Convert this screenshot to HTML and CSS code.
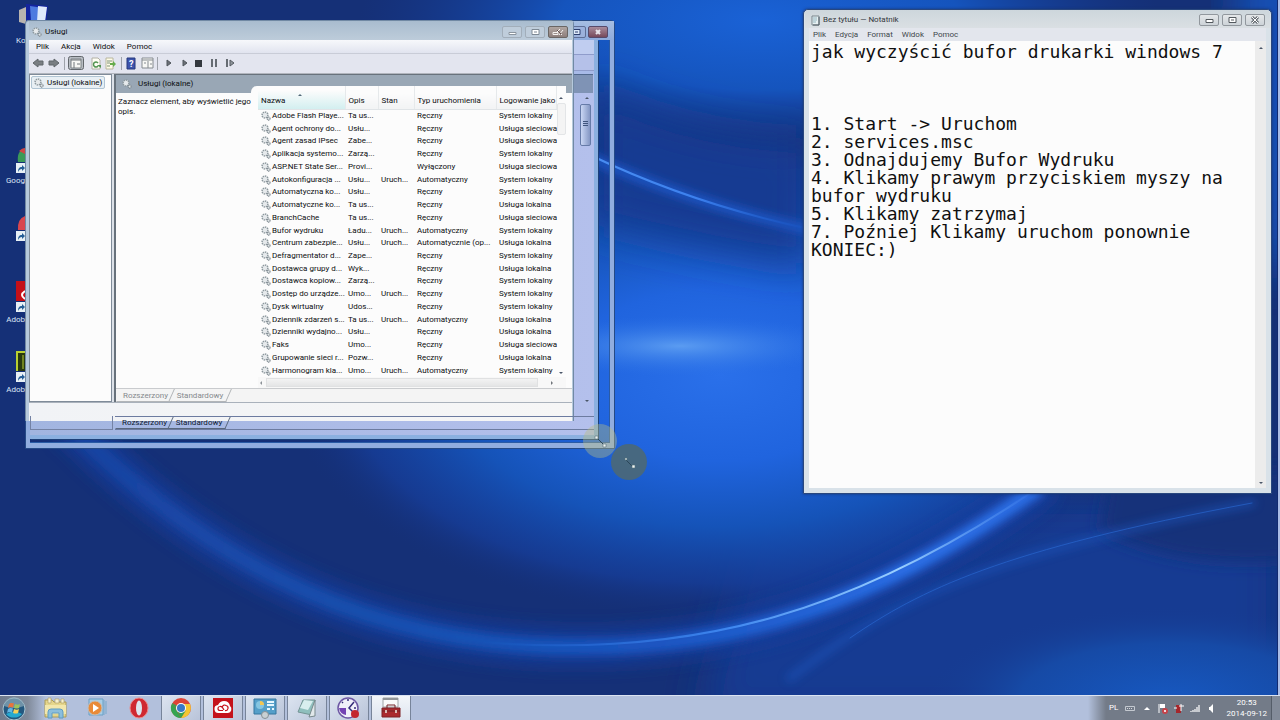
FILE: index.html
```html
<!DOCTYPE html>
<html lang="pl">
<head>
<meta charset="utf-8">
<title>Pulpit</title>
<link rel="stylesheet" href="styles.css">
</head>
<body>
<svg class="defs" aria-hidden="true">
  <symbol id="gear" viewBox="0 0 10 10">
    <circle cx="4" cy="4" r="2.9" fill="#f2f5f6" stroke="#8c979d" stroke-width="1.5" stroke-dasharray="1.5 .7"/>
    <circle cx="4" cy="4" r="1.2" fill="#fff" stroke="#bcc5ca" stroke-width=".5"/>
    <circle cx="7.6" cy="7.6" r="1.5" fill="#e3e8ea" stroke="#7b868d" stroke-width="1.1" stroke-dasharray="1.1 .4"/>
  </symbol>
  <symbol id="shortcut" viewBox="0 0 10 10">
    <path d="M0 0h10v10H0z" fill="#e7f0f6"/><path d="M2 9C2 6 3 4 6 4V2l3 3-3 3V6C4 6 3 7 2 9z" fill="#245d96"/>
  </symbol>
</svg>

<main class="desktop">
  <svg class="wallpaper" viewBox="0 0 1280 720" preserveAspectRatio="none" aria-hidden="true">
    <defs>
      <radialGradient id="core"><stop offset="0" stop-color="#2a70ea"/><stop offset=".35" stop-color="#2064de"/><stop offset=".62" stop-color="#1553b8"/><stop offset=".85" stop-color="#163d98" stop-opacity=".8"/><stop offset="1" stop-color="#15307a" stop-opacity="0"/></radialGradient>
      <radialGradient id="sky"><stop offset="0" stop-color="#1a62d6"/><stop offset=".5" stop-color="#1554bd"/><stop offset="1" stop-color="#153a92" stop-opacity="0"/></radialGradient>
      <radialGradient id="low"><stop offset="0" stop-color="#1758c0"/><stop offset=".6" stop-color="#164aa6"/><stop offset="1" stop-color="#163a90" stop-opacity="0"/></radialGradient>
      <radialGradient id="shine"><stop offset="0" stop-color="#68a8f4"/><stop offset="1" stop-color="#2e74e6" stop-opacity="0"/></radialGradient>
      <linearGradient id="arc" x1="60" x2="1060" y1="0" y2="0" gradientUnits="userSpaceOnUse"><stop offset="0" stop-color="#1b4fb4" stop-opacity=".4"/><stop offset=".3" stop-color="#184fae"/><stop offset=".6" stop-color="#1a57c4"/><stop offset=".85" stop-color="#2a6ee6"/><stop offset="1" stop-color="#2a6ce2"/></linearGradient>
      <linearGradient id="edge" x1="480" x2="1040" y1="0" y2="0" gradientUnits="userSpaceOnUse"><stop offset="0" stop-color="#2a70e0" stop-opacity="0"/><stop offset=".45" stop-color="#4088f0"/><stop offset=".75" stop-color="#9ad0ff"/><stop offset="1" stop-color="#3e82f0" stop-opacity=".2"/></linearGradient>
      <linearGradient id="ray" x1="590" x2="805" y1="0" y2="0" gradientUnits="userSpaceOnUse"><stop offset="0" stop-color="#4a8ef2"/><stop offset=".5" stop-color="#3c80ee"/><stop offset="1" stop-color="#1c5cd0" stop-opacity=".2"/></linearGradient>
      <filter id="b3"><feGaussianBlur stdDeviation="4"/></filter>
      <filter id="b8" x="-20%" y="-20%" width="140%" height="140%"><feGaussianBlur stdDeviation="8"/></filter>
      <filter id="b20" x="-30%" y="-50%" width="160%" height="200%"><feGaussianBlur stdDeviation="20"/></filter>
    </defs>
    <path d="M0 0h1280v720H0z" fill="#153077"/>
    <path d="M760 500h520v220H700z" fill="#163a92" filter="url(#b20)"/>
    <ellipse cx="760" cy="20" rx="400" ry="140" fill="url(#sky)"/>
    <ellipse cx="1275" cy="60" rx="40" ry="220" fill="#1650b4" filter="url(#b20)"/>
    <ellipse cx="720" cy="375" rx="440" ry="245" fill="url(#core)"/>
    <ellipse cx="1170" cy="700" rx="250" ry="95" fill="url(#low)"/>
    <path d="M590 85 Q680 135 810 140V265Q700 250 590 220z" fill="#153a92" filter="url(#b20)"/>
    <path d="M1110 470h180v90Q1180 570 1100 530z" fill="#15307a" filter="url(#b8)"/>
    <ellipse cx="680" cy="346" rx="170" ry="30" fill="url(#shine)" opacity=".8"/>
    <g fill="none" stroke-linecap="round">
      <path d="M70 425C180 535 340 646 571 647C740 650 880 600 1035 490" stroke="#173e9c" stroke-width="40" filter="url(#b8)" opacity=".75"/>
      <path d="M70 425C180 535 340 646 571 647C740 650 880 600 1035 490" stroke="url(#arc)" stroke-width="16" filter="url(#b3)"/>
      <path d="M480 642C700 660 860 608 1035 490" stroke="url(#edge)" stroke-width="2"/>
      <path d="M790 678C880 610 960 560 1252 503" stroke="#1b58c0" stroke-width="8" filter="url(#b3)" opacity=".5"/>
      <path d="M850 638C920 590 1000 550 1252 503" stroke="#2a68d2" stroke-width="1" opacity=".65"/>
      <path d="M560 143Q680 203 830 234" stroke="#1a55c2" stroke-width="10" filter="url(#b3)"/>
      <path d="M590 155Q690 203 805 228" stroke="url(#ray)" stroke-width="2"/>
    </g>
    <path d="M1277 0h1v695h-1z" fill="#122a70"/><path d="M1278 0h2v695h-2z" fill="#a9bce6"/>
  </svg>

  <div class="shortcut s-bin">
    <svg width="32" height="34" viewBox="0 0 32 34"><path d="M3 10l7-3v17l-7-2z" fill="#b9b4b0"/><path d="M10 4l22 2-2 18H10z" fill="#1425a0"/><path d="M14 6l14 2-2 13H15z" fill="#4e7be0"/><path d="M22 6l9 1-2 15h-8z" fill="#dfeafa"/></svg>
    <span>Ko</span>
  </div>
  <div class="shortcut s-chrome">
    <svg width="10" height="26" viewBox="0 0 10 26"><path d="M10 0C4 2 2 7 3 14h7z" fill="#3c9a58"/><path d="M4 3q3-3 6-3v6z" fill="#cf4545"/><use href="#shortcut" x="1" y="15" width="10" height="10"/></svg>
    <span>Goog</span>
  </div>
  <div class="shortcut s-opera">
    <svg width="10" height="26" viewBox="0 0 10 26"><path d="M10 0Q2 3 3 14h7z" fill="#d8474e"/><use href="#shortcut" x="1" y="15" width="10" height="10"/></svg>
  </div>
  <div class="shortcut s-reader">
    <svg width="10" height="32" viewBox="0 0 10 32"><path d="M1 0h9v20H1z" fill="#c41018"/><path d="M10 10q-6 4 0 8" fill="none" stroke="#fff" stroke-width="2"/><use href="#shortcut" x="1" y="21" width="10" height="10"/></svg>
    <span>Adob</span>
  </div>
  <div class="shortcut s-suite">
    <svg width="10" height="32" viewBox="0 0 10 32"><path d="M1 0h9v20H1z" fill="#b8cf32"/><path d="M3 2h7v18H3z" fill="#28380f"/><path d="M8 4v14" stroke="#b8cf32"/><use href="#shortcut" x="1" y="21" width="10" height="10"/></svg>
    <span>Adob</span>
  </div>

  <div class="trail">
    <div class="trail-title">
      <button class="cap" aria-label="Maksymalizuj"><svg viewBox="0 0 18 10"><path d="M6 2.500h7v5H6z" fill="#dce8f8" stroke="#2d3f6e" stroke-width="1"/><path d="M8 4.500h3v1H8z" fill="#2d3f6e"/></svg></button>
      <button class="cap cap-close" aria-label="Zamknij"><svg viewBox="0 0 18 10"><path d="M7 3l4 4M11 3L7 7" stroke="#e8e4ea" stroke-width="2"/></svg></button>
    </div>
    <div class="trail-frame">
      <div class="trail-body">
        <div class="trail-bars"></div>
        <div class="trail-head"></div>
        <div class="trail-scroll">
          <i class="arrow up"></i><b class="thumb"></b><i class="arrow down"></i>
        </div>
        <div class="trail-foot">
          <div class="trail-tree"></div>
          <div class="tabs tabs-front">
            <button class="tab first">Rozszerzony</button><button class="tab">Standardowy</button>
          </div>
        </div>
      </div>
    </div>
  </div>

  <section class="window services" aria-label="Usługi">
    <header class="titlebar">
      <svg class="gear" width="10" height="10"><use href="#gear"/></svg>
      <h1>Usługi</h1>
      <button class="cap pale" aria-label="Minimalizuj"><svg viewBox="0 0 18 10"><path d="M6 5.500h7v2H6z" fill="#fff" stroke="#8a949e" stroke-width="1"/></svg></button>
      <button class="cap pale" aria-label="Maksymalizuj"><svg viewBox="0 0 18 10"><path d="M6 2.500h7v5H6z" fill="#fff" stroke="#7e8994"/><path d="M8 4.500h3v1H8z" fill="#7e8994"/></svg></button>
      <button class="cap worn" aria-label="Zamknij"><svg viewBox="0 0 18 10"><path d="M4 7.500h5v-2H4zM11 2l-4 4M8 3l5 5M14 3l-4 5" fill="none" stroke="#f5f2f0"/><path d="M8 3l4 4" stroke="#65504e"/></svg></button>
    </header>
    <nav class="menu"><button>Plik</button><button>Akcja</button><button>Widok</button><button>Pomoc</button></nav>
    <div class="toolbar">
      <svg width="212" height="18" viewBox="0 0 212 18" aria-hidden="true">
        <path d="M4 9l5-4v2h5v4H9v2zM30 9l-5-4v2h-5v4h5v2z" fill="#797e82" stroke="#60666a"/>
        <path d="M35.500 3v13M92.500 3v13M128.500 3v13" stroke="#9ea2aa"/>
        <rect x="39.500" y="2.500" width="15" height="13" rx="2" fill="#b7bcc2" stroke="#62676c"/>
        <path d="M42 5h10v9H42z" fill="#f7f7f4" stroke="#7c8286"/><path d="M42 6h10M45 8v6M48 10h3" stroke="#70767a"/>
        <path d="M63 4h6l2 2v9h-8z" fill="#fffef5" stroke="#b2b0a5"/><path d="M69 9a2.500 2.500 0 1 0 0 3" fill="none" stroke="#529451" stroke-width="1.500"/><path d="M68 11h4v3z" fill="#529451"/>
        <path d="M77 4h7v11h-7z" fill="#fffce7" stroke="#b8b69e"/><path d="M78 7h5M78 9h3M78 12h3" stroke="#7d917a"/><path d="M81 9h3V7l3 3-3 3v-2h-3z" fill="#65ac4c"/>
        <path d="M98 4h8v11h-8z" fill="#3d54ad" stroke="#27397d"/><text x="100" y="13" class="help">?</text>
        <path d="M113 4h11v10h-11z" fill="#f8f8f5" stroke="#858b90"/><path d="M113 6h11M119 7v7M115 9h2M121 10h2" stroke="#858b90"/>
        <path d="M138 6l4 3-4 3zM154 6l4 3-4 3z" fill="#6b7076" stroke="#50565c"/>
        <path d="M166 6h7v7h-7z" fill="#34393f"/>
        <path d="M183 5v8M187 5v8" stroke="#666c73" stroke-width="2"/>
        <path d="M198 5v8" stroke="#666c73" stroke-width="2"/><path d="M201 6l4 3-4 3z" fill="#90969c" stroke="#555b61"/>
      </svg>
    </div>
    <div class="panes">
      <aside class="tree"><button class="node"><svg width="10" height="10"><use href="#gear"/></svg>Usługi (lokalne)</button></aside>
      <div class="detail">
        <div class="detail-head"><svg width="10" height="10"><use href="#gear"/></svg><h2>Usługi (lokalne)</h2></div>
        <div class="detail-body">
          <p class="hint">Zaznacz element, aby wyświetlić jego opis.</p>
          <div class="list">
            <div class="list-view">
            <table>
              <colgroup><col class="c1"><col class="c2"><col class="c3"><col class="c4"><col class="c5"></colgroup>
              <thead><tr><th class="sorted">Nazwa</th><th>Opis</th><th>Stan</th><th>Typ uruchomienia</th><th>Logowanie jako</th></tr></thead>
              <tbody>
                <tr><td><svg><use href="#gear"/></svg>Adobe Flash Playe...</td><td>Ta us...</td><td></td><td>Ręczny</td><td>System lokalny</td></tr>
                <tr><td><svg><use href="#gear"/></svg>Agent ochrony do...</td><td>Usłu...</td><td></td><td>Ręczny</td><td>Usługa sieciowa</td></tr>
                <tr><td><svg><use href="#gear"/></svg>Agent zasad IPsec</td><td>Zabe...</td><td></td><td>Ręczny</td><td>Usługa sieciowa</td></tr>
                <tr><td><svg><use href="#gear"/></svg>Aplikacja systemo...</td><td>Zarzą...</td><td></td><td>Ręczny</td><td>System lokalny</td></tr>
                <tr><td><svg><use href="#gear"/></svg>ASP.NET State Ser...</td><td>Provi...</td><td></td><td>Wyłączony</td><td>Usługa sieciowa</td></tr>
                <tr><td><svg><use href="#gear"/></svg>Autokonfiguracja ...</td><td>Usłu...</td><td>Uruch...</td><td>Automatyczny</td><td>System lokalny</td></tr>
                <tr><td><svg><use href="#gear"/></svg>Automatyczna ko...</td><td>Usłu...</td><td></td><td>Ręczny</td><td>System lokalny</td></tr>
                <tr><td><svg><use href="#gear"/></svg>Automatyczne ko...</td><td>Ta us...</td><td></td><td>Ręczny</td><td>Usługa lokalna</td></tr>
                <tr><td><svg><use href="#gear"/></svg>BranchCache</td><td>Ta us...</td><td></td><td>Ręczny</td><td>Usługa sieciowa</td></tr>
                <tr><td><svg><use href="#gear"/></svg>Bufor wydruku</td><td>Ładu...</td><td>Uruch...</td><td>Automatyczny</td><td>System lokalny</td></tr>
                <tr><td><svg><use href="#gear"/></svg>Centrum zabezpie...</td><td>Usłu...</td><td>Uruch...</td><td>Automatycznie (op...</td><td>Usługa lokalna</td></tr>
                <tr><td><svg><use href="#gear"/></svg>Defragmentator d...</td><td>Zape...</td><td></td><td>Ręczny</td><td>System lokalny</td></tr>
                <tr><td><svg><use href="#gear"/></svg>Dostawca grupy d...</td><td>Wyk...</td><td></td><td>Ręczny</td><td>Usługa lokalna</td></tr>
                <tr><td><svg><use href="#gear"/></svg>Dostawca kopiow...</td><td>Zarzą...</td><td></td><td>Ręczny</td><td>System lokalny</td></tr>
                <tr><td><svg><use href="#gear"/></svg>Dostęp do urządze...</td><td>Umo...</td><td>Uruch...</td><td>Ręczny</td><td>System lokalny</td></tr>
                <tr><td><svg><use href="#gear"/></svg>Dysk wirtualny</td><td>Udos...</td><td></td><td>Ręczny</td><td>System lokalny</td></tr>
                <tr><td><svg><use href="#gear"/></svg>Dziennik zdarzeń s...</td><td>Ta us...</td><td>Uruch...</td><td>Automatyczny</td><td>Usługa lokalna</td></tr>
                <tr><td><svg><use href="#gear"/></svg>Dzienniki wydajno...</td><td>Usłu...</td><td></td><td>Ręczny</td><td>Usługa lokalna</td></tr>
                <tr><td><svg><use href="#gear"/></svg>Faks</td><td>Umo...</td><td></td><td>Ręczny</td><td>Usługa sieciowa</td></tr>
                <tr><td><svg><use href="#gear"/></svg>Grupowanie sieci r...</td><td>Pozw...</td><td></td><td>Ręczny</td><td>Usługa lokalna</td></tr>
                <tr><td><svg><use href="#gear"/></svg>Harmonogram kla...</td><td>Umo...</td><td>Uruch...</td><td>Automatyczny</td><td>System lokalny</td></tr>
              </tbody>
            </table>
            <div class="vscroll"><i class="arrow up"></i><b class="thumb faint"></b><i class="arrow down"></i></div>
            </div>
            <div class="hscroll"><i class="arrow left"></i><b class="hthumb"></b><i class="arrow right"></i></div>
          </div>
        </div>
        <div class="tabs tabs-faint"><button class="tab first">Rozszerzony</button><button class="tab">Standardowy</button></div>
      </div>
    </div>
    <div class="status"></div>
  </section>

  <svg class="pointer" width="68" height="60" viewBox="0 0 68 60" aria-hidden="true">
    <circle cx="18" cy="19" r="17" fill="#b9bd80" opacity=".4"/>
    <circle cx="47" cy="40" r="18" fill="#4a6878" opacity=".93"/>
    <path d="M15 16l7 7M44 38l7 7" stroke="#2b4658"/>
    <path d="M13 14h3v3h-3zM21 22h3v3h-3zM43 36h2v2h-2zM50 43h3v3h-3z" fill="#eef4f2" stroke="#56707a" stroke-width=".6"/>
  </svg>

  <section class="window notepad" aria-label="Bez tytułu — Notatnik">
    <header class="titlebar">
      <svg width="9" height="11" viewBox="0 0 9 11"><path d="M1 1h7v9H1z" fill="#e8f1f3" stroke="#78868d"/><path d="M2 3h4M2 5h4M2 7h3" stroke="#94b6c0"/><path d="M8 2v8H2" fill="none" stroke="#555f66"/></svg>
      <h1>Bez tytułu — Notatnik</h1>
      <button class="cap soft" aria-label="Minimalizuj"><svg viewBox="0 0 18 10"><path d="M6 4.500h7v3H6z" fill="#fff" stroke="#53595e"/></svg></button>
      <button class="cap soft" aria-label="Maksymalizuj"><svg viewBox="0 0 18 10"><path d="M6 2.500h7v5H6z" fill="#fff" stroke="#53595e"/><path d="M8 4.500h3v1H8z" fill="#53595e"/></svg></button>
      <button class="cap soft" aria-label="Zamknij"><svg viewBox="0 0 18 10"><path d="M6 2l6 6M12 2L6 8" stroke="#666c72" stroke-width="3"/><path d="M6 2l6 6M12 2L6 8" stroke="#fff"/></svg></button>
    </header>
    <nav class="menu"><button>Plik</button><button>Edycja</button><button>Format</button><button>Widok</button><button>Pomoc</button></nav>
    <div class="editor">
      <textarea aria-label="Treść notatki" spellcheck="false">jak wyczyścić bufor drukarki windows 7



1. Start -&gt; Uruchom
2. services.msc
3. Odnajdujemy Bufor Wydruku
4. Klikamy prawym przyciskiem myszy na bufor wydruku
5. Klikamy zatrzymaj
7. Poźniej Klikamy uruchom ponownie
KONIEC:)</textarea>
      <div class="vscroll note-scroll"><i class="arrow up"></i><i class="arrow down"></i></div>
    </div>
  </section>
</main>

<footer class="taskbar">
  <button class="start" aria-label="Start"><svg width="26" height="24" viewBox="0 0 26 24"><circle cx="13" cy="13" r="11" fill="#23587f" stroke="#a9c4d0"/><path d="M3 10a10 9 0 0 1 20 0q-10 4-20 0z" fill="#8eabb9" opacity=".7"/><path d="M5 18q8-5 16 0a10 9 0 0 1-16 0z" fill="#25a9d0"/><path d="M8 8q2-1.500 5-.5l-1 4q-3-1-5 .5z" fill="#e8743b"/><path d="M14 8q3 1.500 5 0l-1 4q-2 1-5 0z" fill="#9bc45a"/><path d="M7 13q2-1.500 5-.5l-1 4q-3-1-5 .5z" fill="#63b6e6"/><path d="M13 13q3 1.500 5 0l-1 4q-2 1-5 0z" fill="#f5cf58"/></svg></button>
  <div class="pins">
    <button aria-label="Eksplorator"><svg width="26" height="22" viewBox="0 0 26 22"><path d="M2 3h7l2 2h12v15H2z" fill="#e5d68b" stroke="#ad9c58"/><path d="M5 1h3v5H5zM12 2h4v4h-4zM18 2h3v4h-3z" fill="#f6f1cf" stroke="#b4a46a" stroke-width=".7"/><path d="M2 8h21v9H2z" fill="#f2e7ac"/><path d="M5 21v-6q0-3 3-3h9q3 0 3 3v6h-4v-5H9v5z" fill="#8bbedc" stroke="#5f9cc2"/></svg></button>
    <button aria-label="Odtwarzacz"><svg width="22" height="22" viewBox="0 0 22 22"><path d="M4 2h14v16H4z" fill="#a7cde6" stroke="#6b9fc4"/><path d="M19 3v15M21 4v13" stroke="#77a9cc"/><circle cx="10" cy="11" r="7" fill="#e98a38" stroke="#c5c0ba"/><path d="M8 7l6 4-6 4z" fill="#fff"/></svg></button>
    <button aria-label="Opera"><svg width="22" height="24" viewBox="0 0 22 24"><ellipse cx="11" cy="12" rx="9" ry="10" fill="#cf2931" stroke="#ec8887"/><ellipse cx="11" cy="12" rx="3" ry="7.500" fill="#dce5ed"/></svg></button>
  </div>
  <div class="apps">
    <button aria-label="Chrome"><svg width="22" height="22" viewBox="0 0 22 22"><circle cx="11" cy="11" r="10" fill="#dc4437"/><path d="M2.300 6L11 21A10 10 0 0 1 2.300 6z" fill="#35a552"/><path d="M11 21a10 10 0 0 0 9-14h-9l4.500 6.500z" fill="#f4c632"/><path d="M2.300 6L8 15l3 6 4.500-7z" fill="#35a552"/><circle cx="11" cy="11" r="5" fill="#fff"/><circle cx="11" cy="11" r="4" fill="#3878c8"/></svg></button>
    <button aria-label="Creative Cloud"><svg width="22" height="20" viewBox="0 0 22 20"><path d="M1 0h20v20H1z" fill="#c4121b"/><path d="M7 15a4 4 0 0 1-1-8q2-4 6-4 5 0 6 5a4 4 0 0 1-2 7z" fill="#fff"/><path d="M12 12q-2-4-4-3.500a2 2 0 1 0 0 4h3M10 9q2-3 4-1.500a2.500 2.500 0 0 1-1 5" fill="none" stroke="#c4121b" stroke-width="1.200"/></svg></button>
    <button aria-label="Panel sterowania"><svg width="24" height="22" viewBox="0 0 24 22"><path d="M1 2h22v15H1z" fill="#559fc9" stroke="#36779f"/><circle cx="7" cy="8" r="4" fill="#86c5e0"/><path d="M7 8V4a4 4 0 0 1 4 4z" fill="#f2c551"/><path d="M14 5h7M14 8h7M14 12h3M19 12h2" stroke="#e6f7ff" stroke-width="2"/><circle cx="12" cy="18" r="3.500" fill="#c9d0d3" stroke="#859096"/></svg></button>
    <button aria-label="Notatnik"><svg width="24" height="22" viewBox="0 0 24 22"><path d="M8 3l12 0-3 15-14-3z" fill="#8fbfbd" stroke="#749494"/><path d="M9 3l9 1-5 9-8-2z" fill="#d8eeee"/><path d="M20 3v16l-6 1z" fill="#e1e8ea" stroke="#78898d"/></svg></button>
    <button aria-label="Zegar"><svg width="24" height="24" viewBox="0 0 24 24"><circle cx="11" cy="12" r="10" fill="#f0eff9" stroke="#6d57a4" stroke-width="1.500"/><path d="M2 12h7v7q-6-1-7-7" fill="#7342b3"/><path d="M11 3v2M19 12h-2M5 6l1 1M17 6l-5 6 4 4" fill="none" stroke="#342c78" stroke-width="1.500"/><circle cx="18" cy="18" r="4" fill="#c3272f"/></svg></button>
    <button class="active" aria-label="Usługi"><svg width="24" height="22" viewBox="0 0 24 22"><path d="M4 1h15v9H4z" fill="#fafafa" stroke="#a0a3a5"/><path d="M4 2h15" stroke="#929699" stroke-width="2"/><path d="M3 11h18v9H3z" fill="#aa2a2e" stroke="#7e2024"/><path d="M8 11V8h8v3M3 14h18" fill="none" stroke="#722226"/><path d="M6 13h2v3H6zM16 13h2v3h-2z" fill="#d8bab5"/></svg></button>
  </div>
  <div class="tray">
    <span class="lang">PL</span>
    <svg width="92" height="16" viewBox="0 0 92 16" aria-hidden="true"><path d="M3.500 6.500h9v4h-9z" fill="none" stroke="#c4c9d0"/><path d="M5 8.500h6" stroke="#d6d9dd" stroke-dasharray="1 1"/><path d="M22 10h6l-3-3z" fill="#fff"/><path d="M37 4v9" stroke="#fff"/><path d="M38 4h5v4h-5z" fill="#fff"/><circle cx="43" cy="11" r="3" fill="#c7434a"/><path d="M42 10l2 2m0-2l-2 2" stroke="#fff" stroke-width=".8"/><path d="M54 5h5v8h-5z" fill="#a5272c"/><path d="M52 8h3M59 4v7M57 6h5" stroke="#fff"/><path d="M69 12v-1M71 12v-2M73 12V9M75 12V7M77 12V5" stroke="#fff" stroke-width="1.200"/><path d="M87 7h1l3-3v9l-3-3h-1z" fill="#fff"/></svg>
    <time><span>20:53</span><span>2014-09-12</span></time>
    <i class="peek"></i>
  </div>
</footer>
</body>
</html>
```
FILE: styles.css
```css
* { box-sizing: border-box; }
body {
  margin: 0;
  height: 100vh;
  display: flex;
  flex-direction: column;
  overflow: hidden;
  background: #153077;
  color: #0c0e10;
  font: 400 8px/10px Roboto, "Noto Sans", sans-serif;
}
button { margin: 0; padding: 0; border: 0; background: none; font: inherit; color: inherit; }
svg { display: block; flex: none; }
h1, h2, p { margin: 0; font: inherit; }
.defs { position: absolute; width: 0; height: 0; }

.desktop { flex: 1; position: relative; min-height: 0; }
.wallpaper { position: absolute; left: 0; top: 0; width: 100vw; height: 100vh; }

/* desktop shortcuts */
.shortcut { position: absolute; left: 0; width: 25px; display: flex; flex-direction: column; align-items: flex-end; gap: 2px; color: #dce6f6; }
.s-bin { top: 0; left: 16px; width: 32px; }
.s-bin span { align-self: flex-start; }
.s-chrome { top: 148px; }
.s-opera { top: 216px; }
.s-reader { top: 281px; }
.s-suite { top: 351px; }

/* caption buttons */
.cap { width: 20px; height: 12px; border: 1px solid #5f6f96; border-radius: 2px; background: #9cb2dc; }
.cap svg { width: 18px; height: 10px; fill: none; }
.cap-close { background: linear-gradient(#a88c9c, #77495a); border-color: #574a6a; }
.pale { background: #bfcddb; border-color: #a2aeba; }
.worn { background: linear-gradient(#b0a6a2, #8e7f7c); border-color: #6a6664; }
.soft { background: linear-gradient(#e4e7e9, #cdd3d8); border-color: #91979d; }

.arrow { width: 0; height: 0; border: 3px solid transparent; }
.arrow.up { border-top: 0; border-bottom-color: #4a5668; }
.arrow.down { border-bottom: 0; border-top-color: #4a5668; }
.arrow.left { border-left: 0; border-right-color: #8c9197; }
.arrow.right { border-right: 0; border-left-color: #70757b; }

/* resized outline drawn behind the services window */
.trail { position: absolute; left: 25px; top: 20px; width: 590px; height: 429px; display: flex; flex-direction: column; border: 1px solid #254a86; border-radius: 4px 4px 0 0; }
.trail-title { height: 19px; padding: 5px 6px 0 0; display: flex; justify-content: flex-end; background: linear-gradient(#a6bee2, #8eabdc); }
.trail-title .cap:first-child { margin-right: 2px; }
.trail-frame { flex: 1; display: flex; border: solid #91addf; border-width: 0 4px 5px 4px; box-shadow: inset -1px -1px #2a5ba5; }
.trail-body { flex: 1; margin: 0 12px 4px 0; display: flex; flex-direction: column; background: linear-gradient(90deg, #a2b5e0, #b4c0ec); border: solid #8bb0e0; border-width: 0 4px 4px 0; box-shadow: 1px 1px #1d4078; }
.trail-bars { height: 34px; background: linear-gradient(#c0cdf0 0 14px, #8f9ccb 14px 15px, #b5c1e9 15px 30px, #8f9ccb 30px 31px, #a8bae8 31px); }
.trail-head { height: 19px; margin-right: 1px; background: #7f93b5; border-top: 1px solid #52698e; }
.trail-scroll { flex: 1; padding: 4px 3px 14px; display: flex; flex-direction: column; align-items: flex-end; }
.trail-scroll .arrow { margin-right: 2px; border-width: 2px; }
.trail-scroll .up { border-top-width: 0; }
.trail-scroll .down { margin-top: auto; border-bottom-width: 0; }
.trail-foot { display: flex; gap: 2px; margin-bottom: 5px; }
.trail-tree { position: relative; z-index: 3; width: 83px; border: solid #7482a4; border-width: 0 1px 1px; }
.thumb { width: 11px; height: 42px; margin-top: 5px; border: 1px solid #667ba8; border-radius: 2px; background: linear-gradient(#40557d, #40557d) center 16px / 5px 1px no-repeat, linear-gradient(#40557d, #40557d) center 18px / 5px 1px no-repeat, linear-gradient(#40557d, #40557d) center 20px / 5px 1px no-repeat, linear-gradient(90deg, #c9d6f4, #8497c4); }

.tabs { display: flex; height: 14px; padding-left: 5px; }
.tab { position: relative; width: 54px; text-align: center; z-index: 0; }
.tab.first { width: 49px; margin-right: 3px; }
.tab::before { content: ""; position: absolute; inset: 0 -2px; z-index: -1; border: solid #59687e; border-width: 0 1px 1px 0; transform: skewX(-24deg); }
.tabs-front { position: relative; z-index: 3; flex: 1; border: solid #6c7ba0; border-width: 1px 0; color: #0f1930; }
.tabs-faint { color: #85898d; border-top: 1px solid #c9cbce; background: #f4f4f4; }
.tabs-faint .tab::before { border-color: #b2b5b8; }

/* windows */
.window { position: absolute; display: flex; flex-direction: column; }
.titlebar { display: flex; align-items: center; }
.titlebar h1 { flex: 1; }
.menu { display: flex; align-items: center; }

.services { left: 25px; top: 20px; width: 549px; height: 401px; z-index: 2; border: 1px solid #7189a4; border-width: 1px 1px 0; border-radius: 4px 4px 0 0; background: #b6c9dc; padding: 0 5px 0 3px; }
.services .titlebar { height: 19px; gap: 3px; padding: 3px 5px 0 3px; margin: 0 -5px 0 0; background: linear-gradient(#a9bccf, #bdccda); }
.services .menu { height: 14px; gap: 12px; padding-left: 7px; background: linear-gradient(#f7f8fb, #e1e4ef); border-bottom: 1px solid #c9ccd7; margin-right: -4px; }
.toolbar { height: 20px; background: #e3e5ef; border-bottom: 1px solid #b1b5bd; margin-right: -4px; }
.help { font: 700 9px Roboto, sans-serif; fill: #fff; }
.panes { flex: 1; display: flex; gap: 2px; min-height: 0; background: #dce1e8; margin-right: -4px; }
.tree { width: 83px; background: #fcfcfc; border: 1px solid #7f8b99; padding: 1px; }
.node { display: flex; align-items: center; gap: 3px; height: 13px; padding: 0 2px; border: 1px solid #b0c4d3; border-radius: 2px; background: #e8eff4; white-space: nowrap; }
.detail { flex: 1; min-width: 0; display: flex; flex-direction: column; border: solid #68727c; border-width: 1px 0 0 2px; background: #fcfcfc; }
.detail-head { height: 18px; display: flex; align-items: center; gap: 6px; padding-left: 6px; background: #99a7b5; }
.detail-body { flex: 1; display: flex; min-height: 0; }
.hint { width: 135px; padding: 4px 0 0 2px; }
.list { flex: 1; min-width: 0; margin-top: -7px; margin-right: 6px; padding-left: 7px; border-radius: 6px 0 0 0; background: #fcfcfc; display: flex; flex-direction: column; }
.list-view { display: flex; height: 291px; }
table { width: 298px; table-layout: fixed; border-collapse: collapse; height: 291px; flex: none; }
.c1 { width: 87px; }
.c2 { width: 33px; }
.c3 { width: 36px; }
.c4 { width: 82px; }
.c5 { width: 60px; }
th { height: 23px; padding: 7px 0 0 3px; font-weight: inherit; text-align: left; white-space: nowrap; border-right: 1px solid #e6e9eb; border-bottom: 1px solid #e0e4e7; background: linear-gradient(#fcfcfc 30%, #f2f3f4); }
th.sorted { position: relative; background: linear-gradient(#fcfcfc 20%, #d3eff0); }
th.sorted::after { content: ""; position: absolute; left: 40px; top: 8px; border: 2px solid transparent; border-top: 0; border-bottom-color: #526878; }
td { padding: 0 0 0 3px; white-space: nowrap; line-height: 12px; }
td svg { width: 10px; height: 10px; float: left; margin: 1px 1px 0 0; }
.vscroll { display: flex; flex-direction: column; align-items: center; width: 11px; padding: 11px 0 3px; }
.vscroll .down { margin-top: auto; }
.vscroll .arrow { border-width: 2px; }
.vscroll .up { border-top-width: 0; }
.vscroll .down { border-bottom-width: 0; }
.thumb.faint { width: 9px; height: 32px; margin-top: 4px; border-color: #e3e5e7; background: #f4f4f4; }
.hscroll { height: 11px; display: flex; align-items: center; padding: 0 13px 0 2px; background: #f8f8f8; }
.hthumb { flex: 1; height: 9px; margin: 0 13px 0 4px; border: 1px solid #e0e1e2; background: linear-gradient(#f3f3f3, #e4e5e6); }
.hscroll .arrow { border-width: 2px; }
.hscroll .left { border-left-width: 0; }
.hscroll .right { border-right-width: 0; }
.status { height: 19px; margin-right: -4px; background: linear-gradient(90deg, #f1f3f6, #f6f6f6); border-top: 1px solid #a9b1bb; }

.pointer { position: absolute; left: 582px; top: 422px; z-index: 4; }

/* notepad */
.notepad { left: 803px; top: 9px; width: 469px; height: 485px; padding: 0 5px 5px; border: 1px solid #29477e; border-radius: 5px 5px 0 0; background: #d9e2e9; box-shadow: 0 0 3px #17336f; }
.notepad .titlebar { height: 18px; gap: 3px; padding: 2px 5px 0 6px; margin: 0 -4px; color: #33383d; background: linear-gradient(#cdd6dc, #dadfe3); border-radius: 4px 4px 0 0; }
.notepad .menu { height: 13px; gap: 9px; padding-left: 4px; color: #41464c; background: #e3e6ed; }
.editor { flex: 1; display: flex; min-height: 0; background: #fcfcfc; }
textarea { flex: 1; margin: 0; padding: 2px 0 0 2px; border: 0; outline: 0; resize: none; overflow: hidden; background: #fcfcfc; color: #101010; font: 18px/18px "DejaVu Sans Mono", monospace; }
.note-scroll { background: #ececec; padding: 6px 0 4px; }

/* taskbar */
.taskbar { position: relative; height: 25px; display: flex; border-top: 1px solid #dbe3f2; background: #b2c0dc; overflow: hidden; }
.start { width: 46px; padding-left: 1px; background: linear-gradient(90deg, #6f7b8d, #808a9a 60%, #b2c0dc); }
.pins { display: flex; width: 115px; }
.pins button { width: 41px; display: flex; align-items: center; justify-content: center; }
.pins button:first-child { width: 20px; }
.pins button:nth-child(2) { width: 60px; }
.pins button:last-child { width: 26px; }
.apps { display: flex; gap: 2px; }
.apps button { width: 40px; display: flex; align-items: center; justify-content: center; border: solid #77849a; border-width: 0 1px; background: linear-gradient(135deg, #dce4f0, #b9c4d9); }
.apps .active { background: linear-gradient(#f3f6fa, #dde4ef); }
.tray { margin-left: auto; width: 192px; display: flex; align-items: center; color: #fff; background: linear-gradient(90deg, #b2c0dc, #737b88 18px); }
.lang { margin: 0 4px 0 21px; }
time { margin-left: auto; display: flex; flex-direction: column; align-items: center; line-height: 11px; }
.peek { width: 9px; height: 24px; margin-left: 4px; border-left: 1px solid #555d69; background: #838b99; }
```
